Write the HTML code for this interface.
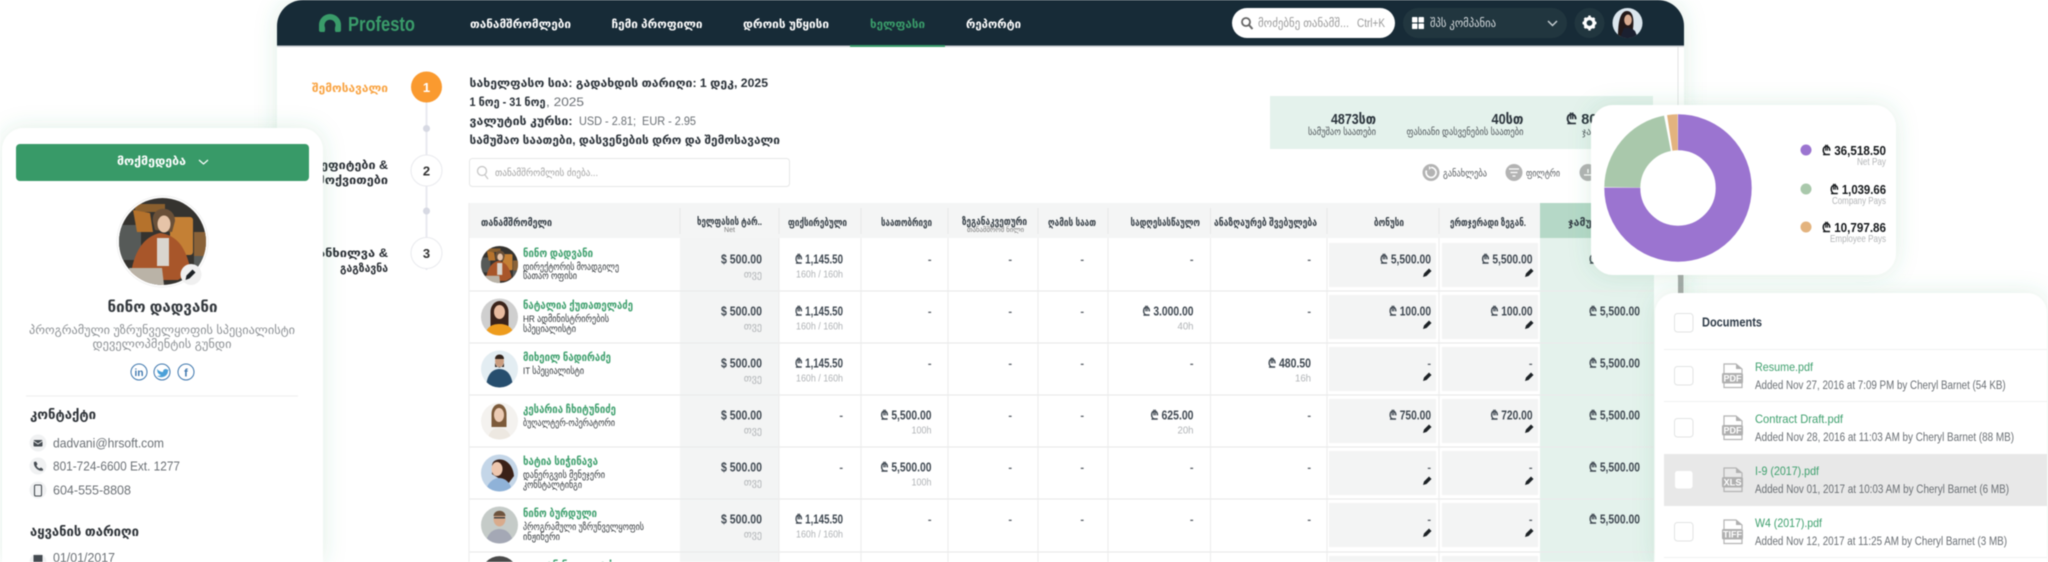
<!DOCTYPE html>
<html lang="ka"><head><meta charset="utf-8"><title>Profesto</title>
<style>
html,body{margin:0;padding:0;background:#fff;width:2048px;height:562px;overflow:hidden}
#w{width:2048px;height:562px;overflow:hidden;position:relative}
svg{display:block;filter:blur(.55px)}
text{font-family:"Liberation Sans","DejaVu Sans",sans-serif;white-space:pre}
.b{font-weight:700}
.nv{font-size:12px;font-weight:700;fill:#fff}
.h{font-size:10.5px;font-weight:700;fill:#333c44}
.nm{font-size:11.5px;font-weight:700;fill:#3fa06e}
.sb{font-size:9.5px;fill:#2f3438}
.a{font-size:12.5px;font-weight:700;fill:#404952;text-anchor:end}
.s{font-size:10px;fill:#b0b3b6;text-anchor:end}
.d{font-size:11px;font-weight:700;fill:#5a6067;text-anchor:end}
.tl{font-size:11.5px;font-weight:700;fill:#2c333a}
.q{fill:#f3f4f4}
.v{stroke:#ececec;stroke-width:1}
.dn{font-size:12px;fill:#3fa06e}
.ds{font-size:11.5px;fill:#6a6f74}
.cb{fill:#fff;stroke:#e2e4e4;stroke-width:1}
.lg{font-size:13px;font-weight:700;fill:#16191c;text-anchor:end}
.ls{font-size:10.5px;fill:#b3b5b7;text-anchor:end}
.ct{font-size:12.5px;fill:#6c7176}
.pc{fill:#1d2226}
</style></head><body><div id="w">
<svg xmlns="http://www.w3.org/2000/svg" width="2048" height="562" viewBox="0 0 2048 562">
<defs>
<filter id="sh" filterUnits="userSpaceOnUse" x="-60" y="-60" width="2200" height="700"><feDropShadow dx="0" dy="0" stdDeviation="11" flood-color="#3a9c6a" flood-opacity=".17"/></filter>
<clipPath id="c0"><circle cx="162.500" cy="241.500" r="43.500"/></clipPath>
<clipPath id="c1"><circle cx="499.500" cy="264.500" r="18.500"/></clipPath>
<clipPath id="c2"><circle cx="499.500" cy="317" r="18.500"/></clipPath>
<clipPath id="c3"><circle cx="499.500" cy="369" r="18.500"/></clipPath>
<clipPath id="c4"><circle cx="499.500" cy="421" r="18.500"/></clipPath>
<clipPath id="c5"><circle cx="499.500" cy="473" r="18.500"/></clipPath>
<clipPath id="c6"><circle cx="499.500" cy="525" r="18.500"/></clipPath>
<clipPath id="c8"><circle cx="1627.500" cy="23" r="15"/></clipPath>
<g id="nn">
<rect x="119" y="198" width="87" height="87" fill="#35332f"/>
<rect x="119" y="225" width="22" height="35" fill="#565a58"/>
<path d="M135 204H165V212H135Z" fill="#8a5f2e"/>
<path d="M133 210L150 213L153 232L137 232Z" fill="#b5722c"/>
<rect x="170" y="217" width="23" height="38" rx="3" fill="#c48035"/>
<rect x="194" y="232" width="12" height="24" fill="#8a6238"/>
<rect x="194" y="256" width="12" height="24" fill="#585c5a"/>
<path d="M153 222C150 205 175 204 175 221L172 232L155 230Z" fill="#6a5038"/>
<ellipse cx="164" cy="224" rx="6.500" ry="8.500" fill="#e6c4a8"/>
<path d="M131 273C135 248 146 236 160 233C176 235 186 246 191 272L178 280H142Z" fill="#a8562a"/>
<rect x="157" y="238" width="12" height="28" fill="#d9d5cf"/>
<path d="M129 268H162L164 285H132Z" fill="#bab3a7"/>
</g>
</defs>

<!-- main card -->
<path d="M277 562V26A26 26 0 0 1 303 0H1658A26 26 0 0 1 1684 26V562Z" fill="#fff" filter="url(#sh)"/>
<path d="M277 46V26A26 26 0 0 1 303 0H1658A26 26 0 0 1 1684 26V46Z" fill="#172b37"/>
<rect x="277" y="45.500" width="1407" height="1.500" fill="#c9ced2"/>

<!-- logo -->
<path d="M319 30V25A11 11 0 0 1 341 25V30Q341 32 339 32H335.500Q334.500 30 335 27.500A5.500 5.500 0 1 0 325 27.500Q325.500 30 324.500 32H321Q319 32 319 30Z" fill="#3a9c6a"/>
<text x="348" y="31" font-size="20" font-weight="700" fill="#3a9c6a" textLength="67" lengthAdjust="spacingAndGlyphs">Profesto</text>

<!-- nav -->
<text class="nv" x="470" y="28" textLength="101" lengthAdjust="spacingAndGlyphs">თანამშრომლები</text>
<text class="nv" x="611.500" y="28" textLength="91" lengthAdjust="spacingAndGlyphs">ჩემი პროფილი</text>
<text class="nv" x="743" y="28" textLength="86" lengthAdjust="spacingAndGlyphs">დროის უწყისი</text>
<text class="nv" x="870" y="28" textLength="55" lengthAdjust="spacingAndGlyphs" style="fill:#3a9c6a">ხელფასი</text>
<text class="nv" x="966" y="28" textLength="55" lengthAdjust="spacingAndGlyphs">რეპორტი</text>
<rect x="850" y="45" width="95" height="2" fill="#3a9c6a"/>

<!-- search -->
<rect x="1232" y="8" width="163" height="30" rx="15" fill="#fff"/>
<circle cx="1246" cy="22" r="4" fill="none" stroke="#666" stroke-width="1.800"/><path d="M1249 25L1252.500 29" stroke="#666" stroke-width="2"/>
<text x="1258" y="27" font-size="11.500" fill="#9a9a9a" textLength="91" lengthAdjust="spacingAndGlyphs">მოძებნე თანამშ...</text>
<text x="1357" y="27" font-size="11.500" fill="#9a9a9a" textLength="28" lengthAdjust="spacingAndGlyphs">Ctrl+K</text>

<!-- company -->
<rect x="1403" y="8" width="164" height="30" rx="15" fill="#21363f"/>
<g fill="#fff"><rect x="1412" y="17" width="5.500" height="5.500" rx=".8"/><rect x="1418.500" y="17" width="5.500" height="5.500" rx=".8"/><rect x="1412" y="23.500" width="5.500" height="5.500" rx=".8"/><rect x="1418.500" y="23.500" width="5.500" height="5.500" rx=".8"/></g>
<text x="1430" y="27" font-size="11.500" fill="#d8dde0" textLength="66" lengthAdjust="spacingAndGlyphs">შპს კომპანია</text>
<path d="M1548 21L1552.500 25.500L1557 21" fill="none" stroke="#c3cbd0" stroke-width="1.500"/>

<!-- gear -->
<circle cx="1589.500" cy="23" r="15" fill="#21363f"/>
<circle cx="1589.500" cy="23" r="4.500" fill="none" stroke="#fff" stroke-width="3.200"/>
<g stroke="#fff" stroke-width="2.400"><path d="M1589.500 15.500V18M1589.500 28V30.500M1582.500 23H1584.500M1594.500 23H1596.500M1584.500 18L1586 19.500M1593 26.500L1594.500 28M1584.500 28L1586 26.500M1593 19.500L1594.500 18"/></g>

<!-- user -->
<g clip-path="url(#c8)"><rect x="1612" y="8" width="31" height="30" fill="#dbe6ee"/><path d="M1618 38C1618 26 1619 11 1627 11C1634 11 1634 22 1633 29L1636 38Z" fill="#23191a"/><ellipse cx="1628" cy="20" rx="3.800" ry="5.500" fill="#d9ac92"/><path d="M1620 38L1624 28C1628 27 1632 28 1635 31L1638 38Z" fill="#1b2030"/></g>

<!-- stepper -->
<path d="M426.500 100V270" stroke="#e9eaf0" stroke-width="2"/>
<circle cx="426.500" cy="87" r="15.500" fill="#fa9a2f"/>
<text x="426.500" y="92" font-size="13" font-weight="700" fill="#fff" text-anchor="middle">1</text>
<text x="388" y="92" font-size="11.500" font-weight="700" fill="#f9a443" text-anchor="end" textLength="76" lengthAdjust="spacingAndGlyphs">შემოსავალი</text>
<circle cx="426.500" cy="128.500" r="3.500" fill="#d7d9e3"/>
<circle cx="426.500" cy="170.500" r="15.500" fill="#fff" stroke="#e9eaee"/>
<text x="426.500" y="175.500" font-size="13" font-weight="700" fill="#333" text-anchor="middle">2</text>
<circle cx="426.500" cy="211" r="3.500" fill="#d7d9e3"/>
<circle cx="426.500" cy="253" r="15.500" fill="#fff" stroke="#e9eaee"/>
<text x="426.500" y="258" font-size="13" font-weight="700" fill="#333" text-anchor="middle">3</text>
<g font-size="11.500" fill="#2b3036">
<text x="388" y="169" text-anchor="end" textLength="88" lengthAdjust="spacingAndGlyphs" font-weight="700">ბენეფიტები &amp;</text>
<text x="388" y="184" text-anchor="end" textLength="88" lengthAdjust="spacingAndGlyphs" font-weight="700">დამოქვითები</text>
<text x="388" y="257" text-anchor="end" textLength="78" lengthAdjust="spacingAndGlyphs" font-weight="700">განხილვა &amp;</text>
<text x="388" y="272" text-anchor="end" textLength="48" lengthAdjust="spacingAndGlyphs" font-weight="700">გაგზავნა</text>
</g>

<!-- heading -->
<text class="tl" x="469.500" y="87" textLength="298.500" lengthAdjust="spacingAndGlyphs">სახელფასო სია: გადახდის თარიღი: 1 დეკ, 2025</text>
<text x="469.500" y="106" font-size="11.500" font-weight="700" fill="#2c333a" textLength="76" lengthAdjust="spacingAndGlyphs">1 ნოე - 31 ნოე</text>
<text x="546" y="106" font-size="11.500" fill="#6a6f74" textLength="38" lengthAdjust="spacingAndGlyphs">, 2025</text>
<text class="tl" x="469.500" y="125" textLength="103" lengthAdjust="spacingAndGlyphs">ვალუტის კურსი:</text>
<text x="579" y="125" font-size="11.500" fill="#6a6f74" textLength="117" lengthAdjust="spacingAndGlyphs">USD - 2.81;  EUR - 2.95</text>
<text class="tl" x="469.500" y="144" textLength="310.500" lengthAdjust="spacingAndGlyphs">სამუშაო საათები, დასვენების დრო და შემოსავალი</text>

<!-- emp search -->
<rect x="469.500" y="158.500" width="320" height="28" rx="3" fill="#fff" stroke="#e6e7e7"/>
<circle cx="482" cy="171" r="4.500" fill="none" stroke="#c4c4c4" stroke-width="1.200"/><path d="M485 175L488 179" stroke="#c4c4c4" stroke-width="1.200"/>
<text x="495" y="176" font-size="10" fill="#a3a3a3" textLength="103" lengthAdjust="spacingAndGlyphs">თანამშრომლის ძიება...</text>

<!-- stats -->
<rect x="1270" y="96" width="383" height="53" fill="#e4f2ec"/>
<text x="1376" y="124" font-size="14.500" font-weight="700" fill="#2a333b" text-anchor="end" textLength="45" lengthAdjust="spacingAndGlyphs">4873სთ</text>
<text x="1376" y="135" font-size="9.500" fill="#4d5358" text-anchor="end" textLength="68" lengthAdjust="spacingAndGlyphs">სამუშაო საათები</text>
<text x="1523.500" y="124" font-size="14.500" font-weight="700" fill="#2a333b" text-anchor="end" textLength="32" lengthAdjust="spacingAndGlyphs">40სთ</text>
<text x="1523.500" y="135" font-size="9.500" fill="#4d5358" text-anchor="end" textLength="117" lengthAdjust="spacingAndGlyphs">ფასიანი დასვენების საათები</text>
<text x="1566" y="124" font-size="14.500" font-weight="700" fill="#2a333b">₾ 80</text>
<text x="1582" y="135" font-size="9.500" fill="#4d5358">ჯა</text>

<!-- actions -->
<circle cx="1431" cy="172.500" r="8.500" fill="#b3b3b3"/><path d="M1431 167.500A5 5 0 1 1 1426.500 170.500" fill="none" stroke="#fff" stroke-width="1.600"/><path d="M1429 166L1431 168L1429 170Z" fill="#fff"/>
<text x="1443" y="176.500" font-size="10" fill="#55595d" textLength="44" lengthAdjust="spacingAndGlyphs">განახლება</text>
<circle cx="1514" cy="172.500" r="8.500" fill="#b3b3b3"/><path d="M1509 169H1519M1510.500 172.500H1517.500M1512.500 176H1515.500" stroke="#fff" stroke-width="1.300"/>
<text x="1526" y="176.500" font-size="10" fill="#55595d" textLength="34" lengthAdjust="spacingAndGlyphs">ფილტრი</text>
<circle cx="1588" cy="172.500" r="8.500" fill="#b3b3b3"/>
<path d="M1584 175H1592M1588 169V173" stroke="#fff" stroke-width="1.300"/>

<!-- table background -->
<rect x="469" y="203" width="1185" height="35" fill="#f4f5f5"/>
<rect x="1540" y="203" width="114" height="35" fill="#b5d8c7"/>
<rect x="1540" y="238" width="114" height="324" fill="#e4f2ec"/>
<rect x="680" y="238" width="99" height="324" fill="#f3f4f4"/>
<g class="q">
<rect x="1329" y="243" width="107" height="44"/><rect x="1442" y="243" width="96" height="44"/>
<rect x="1329" y="295" width="107" height="44"/><rect x="1442" y="295" width="96" height="44"/>
<rect x="1329" y="347" width="107" height="44"/><rect x="1442" y="347" width="96" height="44"/>
<rect x="1329" y="399" width="107" height="44"/><rect x="1442" y="399" width="96" height="44"/>
<rect x="1329" y="451" width="107" height="44"/><rect x="1442" y="451" width="96" height="44"/>
<rect x="1329" y="503" width="107" height="44"/><rect x="1442" y="503" width="96" height="44"/>
<rect x="1329" y="556" width="107" height="6"/><rect x="1442" y="556" width="96" height="6"/>
</g>
<g stroke="#eaebeb" stroke-width="1.300">
<path d="M469 291H1654M469 343H1654M469 395H1654M469 447H1654M469 499H1654M469 552H1654"/>
</g>
<path d="M469 203V562" stroke="#ededed"/>
<path class="v" d="M779 238V562M861 238V562M948 238V562M1038 238V562M1108 238V562M1210.500 238V562M1327 238V562M1439 238V562"/>
<path d="M680 208V234M779 208V234M861 208V234M948 208V234M1038 208V234M1108 208V234M1210.500 208V234M1327 208V234M1439 208V234" stroke="#e7e8e8"/>

<!-- header text -->
<text class="h" x="481" y="226" textLength="71" lengthAdjust="spacingAndGlyphs">თანამშრომელი</text>
<text class="h" x="697" y="225" textLength="65" lengthAdjust="spacingAndGlyphs">ხელფასის ტარ..</text>
<text x="724" y="232" font-size="7.500" fill="#777" textLength="11" lengthAdjust="spacingAndGlyphs">Net</text>
<text class="h" x="788" y="226" textLength="59" lengthAdjust="spacingAndGlyphs">ფიქსირებული</text>
<text class="h" x="881" y="226" textLength="51" lengthAdjust="spacingAndGlyphs">საათობრივი</text>
<text class="h" x="962" y="225" textLength="65" lengthAdjust="spacingAndGlyphs">ზეგანაკვეთური</text>
<text x="967" y="232" font-size="7" fill="#777" textLength="57" lengthAdjust="spacingAndGlyphs">თანამშრომ ნილი</text>
<text class="h" x="1048" y="226" textLength="48" lengthAdjust="spacingAndGlyphs">ღამის საათ</text>
<text class="h" x="1130.500" y="226" textLength="69.500" lengthAdjust="spacingAndGlyphs">სადღესასწაულო</text>
<text class="h" x="1214" y="226" textLength="103" lengthAdjust="spacingAndGlyphs">ანაზღაურებ შვებულება</text>
<text class="h" x="1374" y="226" textLength="30" lengthAdjust="spacingAndGlyphs">ბონუსი</text>
<text class="h" x="1450" y="226" textLength="76" lengthAdjust="spacingAndGlyphs">ერთჯერადი ზეგან.</text>
<text class="h" x="1568" y="226">ჯამური</text>

<!-- avatars -->
<g clip-path="url(#c1)"><use href="#nn" transform="translate(499.500 264.500) scale(.425) translate(-162.500 -241.500)"/></g>
<g clip-path="url(#c2)"><rect x="480" y="298" width="40" height="40" fill="#cfcfcf"/><ellipse cx="499.500" cy="312" rx="9" ry="11" fill="#3a231a"/><rect x="490.500" y="312" width="18" height="16" fill="#3a231a"/><ellipse cx="499.500" cy="312" rx="5.500" ry="7" fill="#e8bb9f"/><path d="M484 338C486 326 493 324 499.500 324C506 324 513 326 515 338Z" fill="#ee9c1d"/></g>
<g clip-path="url(#c3)"><rect x="480" y="350" width="40" height="40" fill="#e3edf2"/><ellipse cx="499.500" cy="361" rx="4.500" ry="6" fill="#c99c7e"/><path d="M495 359C495 353 504 353 504 359Z" fill="#33241c"/><path d="M495 363C497 369 502 369 504 363L504 367L495 367Z" fill="#33241c"/><path d="M486 390C486 375 492 369 499.500 369C507 369 513 375 513 390Z" fill="#274e6e"/></g>
<g clip-path="url(#c4)"><rect x="480" y="402" width="40" height="40" fill="#f4f2ef"/><ellipse cx="499" cy="414" rx="7.500" ry="10" fill="#7c5a3a"/><rect x="491.500" y="414" width="15" height="13" fill="#7c5a3a"/><ellipse cx="499" cy="415" rx="5" ry="7" fill="#eccbb4"/><path d="M487 442C489 430 494 428 499 428C504 428 510 430 512 442Z" fill="#ede8e1"/></g>
<g clip-path="url(#c5)"><rect x="480" y="454" width="40" height="40" fill="#c4d6e8"/><path d="M492 466C492 456 512 456 514 476L508 484L492 474Z" fill="#3a2118"/><ellipse cx="497" cy="469" rx="5.500" ry="7" fill="#eec7ae"/><path d="M485 494C487 482 494 478 499 478C505 478 511 482 513 494Z" fill="#8fb2d8"/></g>
<g clip-path="url(#c6)"><rect x="480" y="506" width="40" height="40" fill="#c5cbc8"/><ellipse cx="499.500" cy="519" rx="6" ry="7.500" fill="#d9ab8c"/><path d="M493.500 516C494 509 505 509 505.500 516Z" fill="#6d533d"/><rect x="494" y="517" width="11" height="1.500" fill="#444"/><path d="M485 546C487 532 494 529 499.500 529C505 529 512 532 514 546Z" fill="#a4a8b5"/></g>
<path d="M486 562A18.500 18.500 0 0 1 513 562Z" fill="#4a4a4a"/>

<!-- rows: names -->
<text class="nm" x="523" y="257" textLength="70" lengthAdjust="spacingAndGlyphs">ნინო დადვანი</text>
<text class="sb" x="523" y="270" textLength="96" lengthAdjust="spacingAndGlyphs">დირექტორის მოადგილე</text>
<text class="sb" x="523" y="279" textLength="54" lengthAdjust="spacingAndGlyphs">სათაო ოფისი</text>
<text class="nm" x="523" y="309" textLength="110" lengthAdjust="spacingAndGlyphs">ნატალია ქუთათელაძე</text>
<text class="sb" x="523" y="322" textLength="86" lengthAdjust="spacingAndGlyphs">HR ადმინისტრირების</text>
<text class="sb" x="523" y="332" textLength="53" lengthAdjust="spacingAndGlyphs">სპეციალისტი</text>
<text class="nm" x="523" y="361" textLength="88" lengthAdjust="spacingAndGlyphs">მიხეილ ნადირაძე</text>
<text class="sb" x="523" y="374" textLength="61" lengthAdjust="spacingAndGlyphs">IT სპეციალისტი</text>
<text class="nm" x="523" y="413" textLength="93" lengthAdjust="spacingAndGlyphs">კესარია ჩხიტუნიძე</text>
<text class="sb" x="523" y="426" textLength="92" lengthAdjust="spacingAndGlyphs">ბუღალტერ-ოპერატორი</text>
<text class="nm" x="523" y="465" textLength="75" lengthAdjust="spacingAndGlyphs">ხატია სიჭინავა</text>
<text class="sb" x="523" y="478" textLength="82" lengthAdjust="spacingAndGlyphs">დანერგვის მენეჯერი</text>
<text class="sb" x="523" y="488" textLength="59" lengthAdjust="spacingAndGlyphs">კონსტალტინგი</text>
<text class="nm" x="523" y="517" textLength="74" lengthAdjust="spacingAndGlyphs">ნინო ბურდული</text>
<text class="sb" x="523" y="530" textLength="121" lengthAdjust="spacingAndGlyphs">პროგრამული უზრუნველყოფის</text>
<text class="sb" x="523" y="540" textLength="37" lengthAdjust="spacingAndGlyphs">ინჟინერი</text>
<text class="nm" x="523" y="569" textLength="95" lengthAdjust="spacingAndGlyphs">ლევან ნიკოლაძე</text>

<!-- salary col -->
<g>
<text class="a" x="762" y="263.500" textLength="41" lengthAdjust="spacingAndGlyphs">$ 500.00</text><text class="s" x="762" y="277.500">თვე</text>
<text class="a" x="762" y="315.500" textLength="41" lengthAdjust="spacingAndGlyphs">$ 500.00</text><text class="s" x="762" y="329.500">თვე</text>
<text class="a" x="762" y="367.500" textLength="41" lengthAdjust="spacingAndGlyphs">$ 500.00</text><text class="s" x="762" y="381.500">თვე</text>
<text class="a" x="762" y="419.500" textLength="41" lengthAdjust="spacingAndGlyphs">$ 500.00</text><text class="s" x="762" y="433.500">თვე</text>
<text class="a" x="762" y="471.500" textLength="41" lengthAdjust="spacingAndGlyphs">$ 500.00</text><text class="s" x="762" y="485.500">თვე</text>
<text class="a" x="762" y="523.500" textLength="41" lengthAdjust="spacingAndGlyphs">$ 500.00</text><text class="s" x="762" y="537.500">თვე</text>
</g>

<!-- fixed col -->
<text class="a" x="843" y="263.500" textLength="48" lengthAdjust="spacingAndGlyphs">₾ 1,145.50</text><text class="s" x="843" y="277.500" textLength="47" lengthAdjust="spacingAndGlyphs">160h / 160h</text>
<text class="a" x="843" y="315.500" textLength="48" lengthAdjust="spacingAndGlyphs">₾ 1,145.50</text><text class="s" x="843" y="329.500" textLength="47" lengthAdjust="spacingAndGlyphs">160h / 160h</text>
<text class="a" x="843" y="367.500" textLength="48" lengthAdjust="spacingAndGlyphs">₾ 1,145.50</text><text class="s" x="843" y="381.500" textLength="47" lengthAdjust="spacingAndGlyphs">160h / 160h</text>
<text class="d" x="843" y="419">-</text>
<text class="d" x="843" y="471">-</text>
<text class="a" x="843" y="523.500" textLength="48" lengthAdjust="spacingAndGlyphs">₾ 1,145.50</text><text class="s" x="843" y="537.500" textLength="47" lengthAdjust="spacingAndGlyphs">160h / 160h</text>

<!-- hourly -->
<text class="d" x="931.500" y="263">-</text>
<text class="d" x="931.500" y="315">-</text>
<text class="d" x="931.500" y="367">-</text>
<text class="a" x="931.500" y="419.500" textLength="51" lengthAdjust="spacingAndGlyphs">₾ 5,500.00</text><text class="s" x="931.500" y="433.500" textLength="20" lengthAdjust="spacingAndGlyphs">100h</text>
<text class="a" x="931.500" y="471.500" textLength="51" lengthAdjust="spacingAndGlyphs">₾ 5,500.00</text><text class="s" x="931.500" y="485.500" textLength="20" lengthAdjust="spacingAndGlyphs">100h</text>
<text class="d" x="931.500" y="523">-</text>

<!-- dashes -->
<g>
<text class="d" x="1012" y="263">-</text><text class="d" x="1084" y="263">-</text><text class="d" x="1193.500" y="263">-</text><text class="d" x="1311" y="263">-</text>
<text class="d" x="1012" y="315">-</text><text class="d" x="1084" y="315">-</text><text class="d" x="1311" y="315">-</text>
<text class="d" x="1012" y="367">-</text><text class="d" x="1084" y="367">-</text><text class="d" x="1193.500" y="367">-</text>
<text class="d" x="1012" y="419">-</text><text class="d" x="1084" y="419">-</text><text class="d" x="1311" y="419">-</text>
<text class="d" x="1012" y="471">-</text><text class="d" x="1084" y="471">-</text><text class="d" x="1193.500" y="471">-</text><text class="d" x="1311" y="471">-</text>
<text class="d" x="1012" y="523">-</text><text class="d" x="1084" y="523">-</text><text class="d" x="1193.500" y="523">-</text><text class="d" x="1311" y="523">-</text>
</g>
<text class="a" x="1193.500" y="315.500" textLength="51" lengthAdjust="spacingAndGlyphs">₾ 3.000.00</text><text class="s" x="1193.500" y="329.500" textLength="16" lengthAdjust="spacingAndGlyphs">40h</text>
<text class="a" x="1193.500" y="419.500" textLength="43" lengthAdjust="spacingAndGlyphs">₾ 625.00</text><text class="s" x="1193.500" y="433.500" textLength="16" lengthAdjust="spacingAndGlyphs">20h</text>
<text class="a" x="1311" y="367.500" textLength="43" lengthAdjust="spacingAndGlyphs">₾ 480.50</text><text class="s" x="1311" y="381.500" textLength="16" lengthAdjust="spacingAndGlyphs">16h</text>

<!-- bonus + one-time -->
<text class="a" x="1431" y="263.500" textLength="51" lengthAdjust="spacingAndGlyphs">₾ 5,500.00</text>
<text class="a" x="1532.500" y="263.500" textLength="51" lengthAdjust="spacingAndGlyphs">₾ 5,500.00</text>
<text class="a" x="1431" y="315.500" textLength="42" lengthAdjust="spacingAndGlyphs">₾ 100.00</text>
<text class="a" x="1532.500" y="315.500" textLength="42" lengthAdjust="spacingAndGlyphs">₾ 100.00</text>
<text class="d" x="1431" y="367">-</text><text class="d" x="1532.500" y="367">-</text>
<text class="a" x="1431" y="419.500" textLength="42" lengthAdjust="spacingAndGlyphs">₾ 750.00</text>
<text class="a" x="1532.500" y="419.500" textLength="42" lengthAdjust="spacingAndGlyphs">₾ 720.00</text>
<text class="d" x="1431" y="471">-</text><text class="d" x="1532.500" y="471">-</text>
<text class="d" x="1431" y="523">-</text><text class="d" x="1532.500" y="523">-</text>

<!-- pencils -->
<g class="pc">
<path d="M1423 277L1424 273.500L1429 268.500L1431.500 271L1426.500 276Z"/><path d="M1525 277L1526 273.500L1531 268.500L1533.500 271L1528.500 276Z"/>
<path d="M1423 329L1424 325.500L1429 320.500L1431.500 323L1426.500 328Z"/><path d="M1525 329L1526 325.500L1531 320.500L1533.500 323L1528.500 328Z"/>
<path d="M1423 381L1424 377.500L1429 372.500L1431.500 375L1426.500 380Z"/><path d="M1525 381L1526 377.500L1531 372.500L1533.500 375L1528.500 380Z"/>
<path d="M1423 433L1424 429.500L1429 424.500L1431.500 427L1426.500 432Z"/><path d="M1525 433L1526 429.500L1531 424.500L1533.500 427L1528.500 432Z"/>
<path d="M1423 485L1424 481.500L1429 476.500L1431.500 479L1426.500 484Z"/><path d="M1525 485L1526 481.500L1531 476.500L1533.500 479L1528.500 484Z"/>
<path d="M1423 537L1424 533.500L1429 528.500L1431.500 531L1426.500 536Z"/><path d="M1525 537L1526 533.500L1531 528.500L1533.500 531L1528.500 536Z"/>
</g>

<!-- total col -->
<text class="a" x="1640" y="263.500" textLength="51" lengthAdjust="spacingAndGlyphs">₾ 5,500.00</text>
<text class="a" x="1640" y="315.500" textLength="51" lengthAdjust="spacingAndGlyphs">₾ 5,500.00</text>
<text class="a" x="1640" y="367.500" textLength="51" lengthAdjust="spacingAndGlyphs">₾ 5,500.00</text>
<text class="a" x="1640" y="419.500" textLength="51" lengthAdjust="spacingAndGlyphs">₾ 5,500.00</text>
<text class="a" x="1640" y="471.500" textLength="51" lengthAdjust="spacingAndGlyphs">₾ 5,500.00</text>
<text class="a" x="1640" y="523.500" textLength="51" lengthAdjust="spacingAndGlyphs">₾ 5,500.00</text>

<!-- scrollbar -->
<rect x="1677.500" y="47" width="1" height="230" fill="#e2e4e4"/>
<rect x="1678" y="270" width="5.500" height="30" fill="#a9a9a9"/>

<!-- donut card -->
<rect x="1591" y="105" width="305" height="170" rx="22" fill="#fff" filter="url(#sh)"/>
<g fill="none" stroke-width="36">
<circle cx="1678" cy="188" r="55.700" stroke="#9b74d0" stroke-dasharray="262.500 350" transform="rotate(-90 1678 188)"/>
<circle cx="1678" cy="188" r="55.700" stroke="#a9c8ab" stroke-dasharray="76 350" transform="rotate(180.800 1678 188)"/>
<circle cx="1678" cy="188" r="55.700" stroke="#e3b37e" stroke-dasharray="8 350" transform="rotate(-98.500 1678 188)"/>
</g>
<circle cx="1806" cy="150" r="5.500" fill="#9b74d0"/>
<text class="lg" x="1886" y="155" textLength="64" lengthAdjust="spacingAndGlyphs">₾ 36,518.50</text>
<text class="ls" x="1886" y="165" textLength="29" lengthAdjust="spacingAndGlyphs">Net Pay</text>
<circle cx="1806" cy="189" r="5.500" fill="#a9c8ab"/>
<text class="lg" x="1886" y="194" textLength="56" lengthAdjust="spacingAndGlyphs">₾ 1,039.66</text>
<text class="ls" x="1886" y="204" textLength="54" lengthAdjust="spacingAndGlyphs">Company Pays</text>
<circle cx="1806" cy="227" r="5.500" fill="#e3b37e"/>
<text class="lg" x="1886" y="232" textLength="64" lengthAdjust="spacingAndGlyphs">₾ 10,797.86</text>
<text class="ls" x="1886" y="242" textLength="56" lengthAdjust="spacingAndGlyphs">Employee Pays</text>

<!-- documents card -->
<path d="M1655 562V313A20 20 0 0 1 1675 293H2027A20 20 0 0 1 2047 313V562Z" fill="#fff" filter="url(#sh)"/>
<rect class="cb" x="1674.500" y="313.500" width="18.500" height="18.500" rx="3"/>
<text x="1702" y="326.500" font-size="12.500" font-weight="700" fill="#2e3b48" textLength="60" lengthAdjust="spacingAndGlyphs">Documents</text>
<path d="M1664 349.500H2047M1664 401.500H2047M1664 557.500H2047" stroke="#f0f1f1"/>
<rect x="1664" y="454" width="383" height="52" fill="#e8e8e8"/>
<rect class="cb" x="1674.500" y="366.500" width="18.500" height="18.500" rx="3"/>
<rect class="cb" x="1674.500" y="418.500" width="18.500" height="18.500" rx="3"/>
<rect class="cb" x="1674.500" y="470.500" width="18.500" height="18.500" rx="3" style="stroke:#e8e8e8"/>
<rect class="cb" x="1674.500" y="522.500" width="18.500" height="18.500" rx="3"/>
<g fill="none" stroke="#b4b4b4" stroke-width="1.200">
<path d="M1724 373V364H1736L1742 369V373M1724 383V387.500H1742V383"/>
<path d="M1724 425V416H1736L1742 421V425M1724 435V439.500H1742V435"/>
<path d="M1724 477V468H1736L1742 473V477M1724 487V491.500H1742V487"/>
<path d="M1724 529V520H1736L1742 525V529M1724 539V543.500H1742V539"/>
</g>
<g fill="#b0b0b0"><rect x="1722" y="373" width="21" height="10.500" rx="1.500"/><rect x="1722" y="425" width="21" height="10.500" rx="1.500"/><rect x="1722" y="477" width="21" height="10.500" rx="1.500"/><rect x="1722" y="529" width="21" height="10.500" rx="1.500"/>
<path d="M1736 364L1742 369H1736Z"/><path d="M1736 416L1742 421H1736Z"/><path d="M1736 468L1742 473H1736Z"/><path d="M1736 520L1742 525H1736Z"/></g>
<g font-size="9" font-weight="700" fill="#fff" text-anchor="middle">
<text x="1732.500" y="381.500" textLength="18" lengthAdjust="spacingAndGlyphs">PDF</text>
<text x="1732.500" y="433.500" textLength="18" lengthAdjust="spacingAndGlyphs">PDF</text>
<text x="1732.500" y="485.500" textLength="18" lengthAdjust="spacingAndGlyphs">XLS</text>
<text x="1732.500" y="537.500" textLength="19" lengthAdjust="spacingAndGlyphs">TIFF</text>
</g>
<text class="dn" x="1755" y="371" textLength="58" lengthAdjust="spacingAndGlyphs">Resume.pdf</text>
<text class="ds" x="1755" y="389" textLength="250.700" lengthAdjust="spacingAndGlyphs">Added Nov 27, 2016 at 7:09 PM by Cheryl Barnet (54 KB)</text>
<text class="dn" x="1755" y="423" textLength="88" lengthAdjust="spacingAndGlyphs">Contract Draft.pdf</text>
<text class="ds" x="1755" y="441" textLength="259" lengthAdjust="spacingAndGlyphs">Added Nov 28, 2016 at 11:03 AM by Cheryl Barnet (88 MB)</text>
<text class="dn" x="1755" y="475" textLength="64" lengthAdjust="spacingAndGlyphs">I-9 (2017).pdf</text>
<text class="ds" x="1755" y="493" textLength="254" lengthAdjust="spacingAndGlyphs">Added Nov 01, 2017 at 10:03 AM by Cheryl Barnet (6 MB)</text>
<text class="dn" x="1755" y="527" textLength="67" lengthAdjust="spacingAndGlyphs">W4 (2017).pdf</text>
<text class="ds" x="1755" y="545" textLength="252" lengthAdjust="spacingAndGlyphs">Added Nov 12, 2017 at 11:25 AM by Cheryl Barnet (3 MB)</text>

<!-- left card -->
<path d="M2 562V150A22 22 0 0 1 24 128H301A22 22 0 0 1 323 150V562Z" fill="#fff" filter="url(#sh)"/>
<rect x="16" y="144" width="293" height="37" rx="4" fill="#389a68"/>
<text x="117" y="165" font-size="11.500" font-weight="700" fill="#fff" textLength="69" lengthAdjust="spacingAndGlyphs">მოქმედება</text>
<path d="M199 160L203.500 164L208 160" fill="none" stroke="#fff" stroke-width="1.200"/>
<circle cx="162.500" cy="241.500" r="45.500" fill="#fff" stroke="#f0f0f0"/>
<g clip-path="url(#c0)"><use href="#nn"/></g>
<circle cx="191" cy="274.500" r="10.500" fill="#f0f0f0"/>
<path class="pc" d="M185.500 280L186.500 275.500L192.500 269.500L195.500 272.500L189.500 278.500Z"/>
<text x="162.500" y="312" font-size="15" font-weight="700" fill="#33383d" text-anchor="middle" textLength="110" lengthAdjust="spacingAndGlyphs">ნინო დადვანი</text>
<text x="162" y="334" font-size="12" fill="#8c9094" text-anchor="middle" textLength="266" lengthAdjust="spacingAndGlyphs">პროგრამული უზრუნველყოფის სპეციალისტი</text>
<text x="162" y="348" font-size="12" fill="#8c9094" text-anchor="middle" textLength="139" lengthAdjust="spacingAndGlyphs">დეველოპმენტის გუნდი</text>
<g fill="#fff" stroke="#3d76ad" stroke-width="1"><circle cx="139" cy="372" r="8"/><circle cx="162" cy="372" r="8"/><circle cx="186" cy="372" r="8"/></g>
<text x="139" y="376" font-size="10" font-weight="700" fill="#3d76ad" text-anchor="middle">in</text>
<path d="M157 369C159 371 161 372 163 372C163 369 166 368 168 370L169 369.500L168 371C168 376 162 379 157 376C159 376 160 375.500 161 375C158 374 157.500 372 157.500 372Z" fill="#4aa0d8"/>
<text x="186" y="376.500" font-size="11" font-weight="700" fill="#3d76ad" text-anchor="middle">f</text>
<path d="M26 396H298" stroke="#eeeeee"/>
<text x="30" y="419" font-size="13" font-weight="700" fill="#2e3338" textLength="66" lengthAdjust="spacingAndGlyphs">კონტაქტი</text>
<circle cx="38" cy="443" r="8.500" fill="#f0f1f2"/><rect x="33.500" y="440" width="9" height="6.500" rx="1" fill="#454b51"/><path d="M33.500 441L38 444L42.500 441" stroke="#f0f1f2" fill="none" stroke-width=".8"/>
<text class="ct" x="53" y="447.500" textLength="111" lengthAdjust="spacingAndGlyphs">dadvani@hrsoft.com</text>
<circle cx="38" cy="466" r="8.500" fill="#f0f1f2"/><path d="M34 462L36 461.500L37.500 464L36.500 465.500C37 467 38 468 39.500 468.500L41 467.500L43 469V470.500C39 472 33 467 34 462Z" fill="#454b51"/>
<text class="ct" x="53" y="470.500" textLength="127" lengthAdjust="spacingAndGlyphs">801-724-6600 Ext. 1277</text>
<circle cx="38" cy="490" r="8.500" fill="#f0f1f2"/><rect x="34.500" y="485" width="7" height="11" rx="1.200" fill="none" stroke="#454b51" stroke-width="1.100"/>
<text class="ct" x="53" y="494.500" textLength="78" lengthAdjust="spacingAndGlyphs">604-555-8808</text>
<text x="30" y="536" font-size="13" font-weight="700" fill="#2e3338" textLength="109" lengthAdjust="spacingAndGlyphs">აყვანის თარიღი</text>
<path d="M29.500 562A8.500 8.500 0 0 1 46.500 562Z" fill="#f0f1f2"/><rect x="33.500" y="555" width="9" height="7" fill="#454b51"/>
<text class="ct" x="53" y="562" textLength="62" lengthAdjust="spacingAndGlyphs">01/01/2017</text>
</svg>
</div></body></html>
